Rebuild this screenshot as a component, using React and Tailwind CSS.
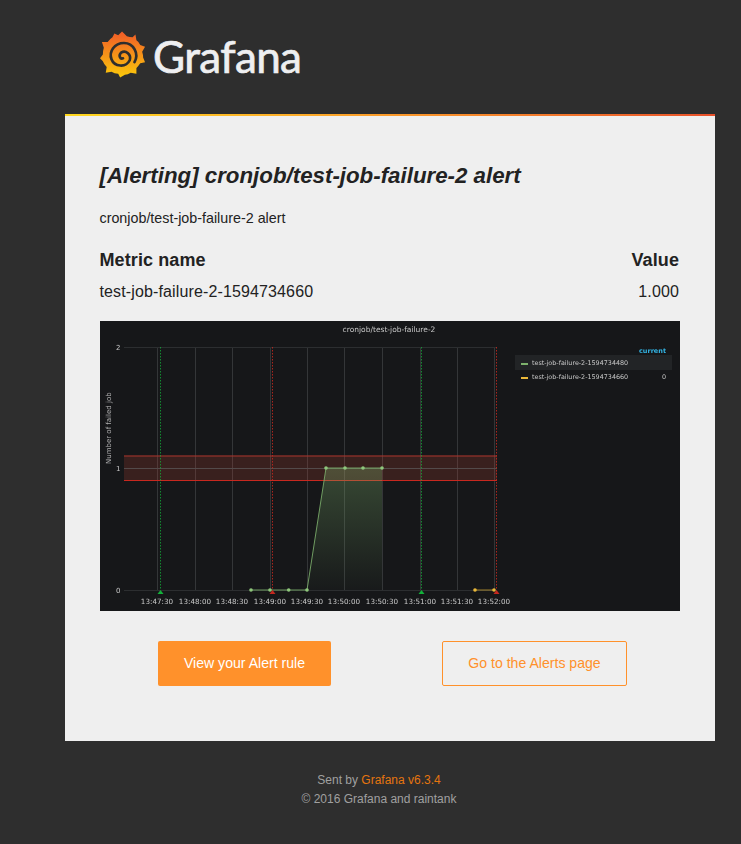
const sans = { fontFamily: '"Liberation Sans", Arial, sans-serif' }

const gridX = [57, 95, 132, 170, 207, 244, 282, 320, 357, 394]
const times = ['13:47:30', '13:48:00', '13:48:30', '13:49:00', '13:49:30', '13:50:00', '13:50:30', '13:51:00', '13:51:30', '13:52:00']
const chartFont = '"DejaVu Sans", sans-serif'

function GrafanaMark() {
  return (
    <svg width="46" height="49" viewBox="0 0 48 50" className="shrink-0">
      <defs>
        <linearGradient id="sun" x1="0" y1="0" x2="0" y2="1">
          <stop offset="0" stopColor="#f05a28" />
          <stop offset="1" stopColor="#fbca0a" />
        </linearGradient>
      </defs>
      <path
        fill="url(#sun)"
        d="M23 1 L28 6 Q31 7 34 7 L37 4 L38 10 Q41 12 42 15 L47 17 L44 22 Q45 25 45 28 L47 33 L42 34 Q40 37 38 39 L38 45 L32 44 Q29 46 26 46 L21 49 L19 45 Q15 45 12 43 L6 44 L7 38 Q4 35 3 32 L0 29 L3 25 Q3 21 4 18 L2 12 L8 12 Q10 9 13 7 L15 3 L19 5 Z"
      />
      <path
        d="M36 33 C41 24 35 13 25 13 C15 13 9 22 12 30 C15 38 27 39 31 31 C33 25 27 20 22 23 C19 26 21 30 24 29"
        fill="none"
        stroke="#2e2e2e"
        strokeWidth="2.8"
        strokeLinecap="round"
      />
    </svg>
  )
}

function AlertChart() {
  return (
    <svg viewBox="0 0 580 290" className="block w-full h-[290px] bg-[#161719] blur-[0.3px]">
      <defs>
        <linearGradient id="area" x1="0" y1="0" x2="0" y2="1">
          <stop offset="0" stopColor="#7eb26d" stopOpacity="0.32" />
          <stop offset="1" stopColor="#7eb26d" stopOpacity="0.02" />
        </linearGradient>
      </defs>

      <text x="289" y="11" textAnchor="middle" fontSize="7.5" fill="#c8c8c8" fontFamily={chartFont}>cronjob/test-job-failure-2</text>

      {/* grid */}
      {gridX.map(x => (
        <line key={x} x1={x + 0.5} x2={x + 0.5} y1="26" y2="269" stroke="#343638" />
      ))}
      {[26.5, 147.5, 269.5].map(y => (
        <line key={y} x1="24" x2="397" y1={y} y2={y} stroke="#2c2e30" />
      ))}

      {/* threshold band */}
      <rect x="24" y="134.5" width="373" height="25" fill="#ea4b3e" fillOpacity="0.17" />
      <line x1="24" x2="397" y1="135" y2="135" stroke="#a8352c" />
      <line x1="24" x2="397" y1="159.5" y2="159.5" stroke="#c9281f" />
      <line x1="24" x2="397" y1="147.5" y2="147.5" stroke="#534a4a" />

      {/* series */}
      <polygon points="207,269 226,147 282,147 282,269" fill="url(#area)" />
      <polyline points="151,269 207,269 226,147 282,147" fill="none" stroke="#7eb26d" strokeOpacity="0.85" />
      {[[151, 269], [170, 269], [188.7, 269], [207, 269], [226, 147], [245, 147], [263, 147], [282, 147]].map(([x, y]) => (
        <circle key={x} cx={x} cy={y} r="1.8" fill="#8fc77c" />
      ))}
      <line x1="375" x2="394" y1="269" y2="269" stroke="#eab839" strokeOpacity="0.65" />
      <circle cx="375" cy="269" r="1.8" fill="#eab839" />
      <circle cx="394" cy="269" r="1.8" fill="#eab839" />

      {/* annotations */}
      <line x1="60.5" x2="60.5" y1="26" y2="269" stroke="#13b13a" strokeOpacity="0.75" strokeDasharray="1.5 1.5" />
      <line x1="172.5" x2="172.5" y1="26" y2="269" stroke="#c4281e" strokeOpacity="0.85" strokeDasharray="1.5 1.5" />
      <line x1="321.5" x2="321.5" y1="26" y2="269" stroke="#13b13a" strokeOpacity="0.75" strokeDasharray="1.5 1.5" />
      <line x1="396.5" x2="396.5" y1="26" y2="269" stroke="#c4281e" strokeOpacity="0.85" strokeDasharray="1.5 1.5" />
      <polygon points="57.5,273 60.5,269 63.5,273" fill="#13b13a" />
      <polygon points="169.5,273 172.5,269 175.5,273" fill="#c4281e" />
      <polygon points="318.5,273 321.5,269 324.5,273" fill="#13b13a" />
      <polygon points="393.5,273 396.5,269 399.5,273" fill="#c4281e" />

      {/* axes */}
      {[['2', 28.5], ['1', 149.5], ['0', 271.5]].map(([label, y]) => (
        <text key={label} x="20.5" y={y} textAnchor="end" fontSize="7" fill="#c8c8c8" fontFamily={chartFont}>{label}</text>
      ))}
      <text transform="translate(11 143) rotate(-90)" fontSize="7" fill="#b0b0b0" fontFamily={chartFont}>Number of failed job</text>
      {times.map((t, i) => (
        <text key={t} x={gridX[i]} y="283" textAnchor="middle" fontSize="7.2" fill="#c8c8c8" fontFamily={chartFont}>{t}</text>
      ))}

      {/* legend */}
      <text x="566" y="31.5" textAnchor="end" fontSize="6.5" fontWeight="700" fill="#33b5e5" fontFamily={chartFont}>current</text>
      <rect x="415" y="34" width="157" height="15" fill="#222426" />
      <rect x="421" y="42" width="7" height="2" fill="#7eb26d" />
      <text x="432" y="44" fontSize="6.4" fill="#c8c8c8" fontFamily={chartFont}>test-job-failure-2-1594734480</text>
      <rect x="421" y="56" width="7" height="2" fill="#eab839" />
      <text x="432" y="58" fontSize="6.4" fill="#c8c8c8" fontFamily={chartFont}>test-job-failure-2-1594734660</text>
      <text x="566" y="58" textAnchor="end" fontSize="6.4" fill="#c8c8c8" fontFamily={chartFont}>0</text>
    </svg>
  )
}

export default function App() {
  return (
    <div className="min-h-[844px] bg-[#2e2e2e] overflow-hidden" style={sans}>
      {/* Logo header */}
      <div className="h-[114px] pl-[100px] pt-[30px] flex items-start gap-[7px]">
        <GrafanaMark />
        <span className="text-[#eeeff1] text-[44px] leading-[50px] tracking-[-0.6px] mt-[1px] [-webkit-text-stroke:0.7px_#eeeff1]" style={{ fontFamily: 'Lato, sans-serif' }}>Grafana</span>
      </div>

      {/* Card */}
      <div className="mx-[65px] w-[650px] h-[627px] bg-[#efefef]">
        <div className="h-[2px] bg-gradient-to-r from-[#ffd81f] via-[#fb9a2a] to-[#e8502a]" />
        <div className="px-[35px] text-[#222222]">
          <h1 className="mt-[46px] -ml-[0.5px] text-[22.3px] leading-[28px] font-bold italic">[Alerting] cronjob/test-job-failure-2 alert</h1>
          <p className="mt-[18px] -ml-[0.5px] text-[14.3px] leading-[20px]">cronjob/test-job-failure-2 alert</p>

          <div className="mt-[20px] -ml-[0.5px] mr-[1px] flex justify-between text-[18px] leading-[24px] tracking-[0.1px] font-bold">
            <span>Metric name</span>
            <span>Value</span>
          </div>
          <div className="mt-[8px] -ml-[0.5px] mr-[1px] flex justify-between text-[16px] leading-[24px] tracking-[0.13px]">
            <span>test-job-failure-2-1594734660</span>
            <span>1.000</span>
          </div>

          <div className="mt-[17px]">
            <AlertChart />
          </div>

          <div className="mt-[30px] flex">
            <a className="ml-[58px] w-[173px] h-[45px] flex items-center justify-center bg-[#ff912b] text-white text-[14.1px] rounded-[2px]">View your Alert rule</a>
            <a className="ml-[111px] w-[185px] h-[45px] flex items-center justify-center border border-[#ff912b] text-[#ff912b] text-[14.1px] rounded-[2px]">Go to the Alerts page</a>
          </div>
        </div>
      </div>

      {/* Footer */}
      <div className="ml-[65px] w-[628px] pt-[30px] text-center text-[12px] leading-[19px] text-[#a0a0a0]">
        <div>Sent by <span className="text-[#e5750f]">Grafana v6.3.4</span></div>
        <div>© 2016 Grafana and raintank</div>
      </div>
    </div>
  )
}
